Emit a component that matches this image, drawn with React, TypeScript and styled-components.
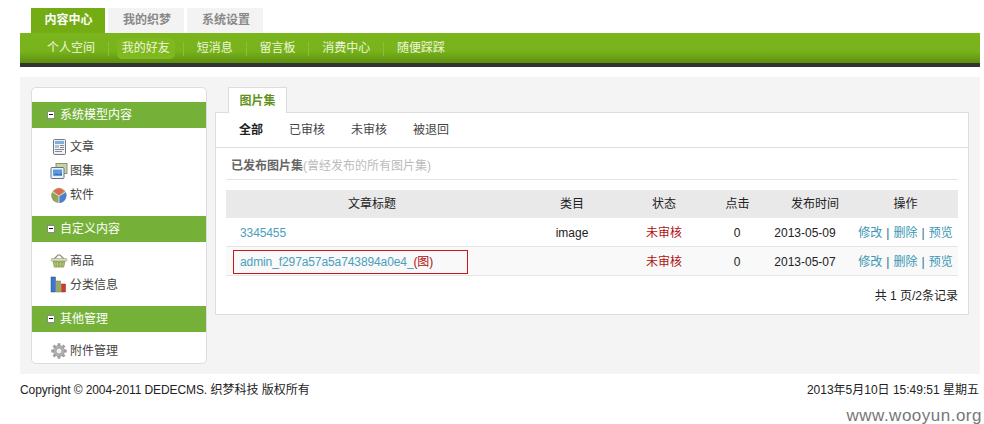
import React from "react";
import styled, { createGlobalStyle } from "styled-components";

const cjk = `"Liberation Sans", "Noto Sans CJK SC", sans-serif`;

const Global = createGlobalStyle`
  html, body { margin: 0; padding: 0; background: #fff; }
  body { font: 12px/18px ${cjk}; color: #333; }
`;

const Page = styled.div`
  width: 984px;
  height: 424px;
  overflow: hidden;
`;
const TopTabs = styled.div`
  display: flex;
  gap: 3px;
  height: 25px;
  padding: 8px 0 0 31px;
`;
const TopTab = styled.div<{ $active?: boolean }>`
  box-sizing: border-box;
  width: ${(p) => (p.$active ? 74 : 76)}px;
  padding-left: ${(p) => (p.$active ? 1 : 2)}px;
  text-align: center;
  line-height: 25px;
  font-weight: 700;
  font-size: 12px;
  color: ${(p) => (p.$active ? "#fff" : "#888")};
  background: ${(p) => (p.$active ? "#74ac14" : "#f3f3f3")};
`;
const NavBar = styled.div`
  display: flex;
  align-items: center;
  height: 30px;
  margin: 0 4px 0 20px;
  padding-left: 27px;
  background: linear-gradient(#7ab51d 0%, #78b31c 60%, #5c900f 100%);
  border-bottom: 4px solid #333;
`;
const NavItem = styled.div<{ $active?: boolean }>`
  position: relative;
  margin-right: 26.8px;
  white-space: nowrap;
  font-size: 12px;
  line-height: 20px;
  color: #eef6dc;
  &::before {
    content: "";
    display: ${(p) => (p.$active ? "block" : "none")};
    position: absolute;
    inset: 0 -5px -1px -5px;
    border-radius: 5px;
    background: #80b91f;
  }
  &::after {
    content: "";
    position: absolute;
    right: -14px;
    top: 4px;
    height: 14px;
    width: 1px;
    background: #8bbf34;
  }
  &:last-child::after {
    display: none;
  }
  & > span {
    position: relative;
  }
`;
const Main = styled.div`
  display: flex;
  gap: 8px;
  height: 277px;
  margin: 10px 4px 0 20px;
  padding: 10px 12px 10px 11px;
  background: #f4f4f4;
`;
const Sidebar = styled.div`
  box-sizing: border-box;
  flex: none;
  width: 176px;
  height: 277px;
  padding-top: 14px;
  background: #fff;
  border: 1px solid #ddd;
  border-radius: 5px;
`;
const GroupHead = styled.div`
  display: flex;
  align-items: center;
  gap: 5px;
  height: 26px;
  padding-left: 15px;
  background: #75b139;
  color: #fff;
  font-size: 12px;
`;
const Minus = styled.span`
  box-sizing: border-box;
  display: block;
  flex: none;
  position: relative;
  width: 8px;
  height: 8px;
  background: #fff;
  border: 1px solid #8a8a8a;
  &::after {
    content: "";
    position: absolute;
    left: 1px;
    top: 2px;
    width: 4px;
    height: 1px;
    background: #111;
  }
`;
const Items = styled.div<{ $pad: number }>`
  padding: 7px 0 ${(p) => p.$pad}px 18px;
`;
const Item = styled.div`
  display: flex;
  align-items: center;
  gap: 2px;
  height: 24px;
  color: #444;
  font-size: 12px;
`;
const Content = styled.div`
  flex: none;
  width: 754px;
  display: flex;
  flex-direction: column;
`;
const PanelTab = styled.div`
  box-sizing: border-box;
  width: 59px;
  height: 26px;
  margin-left: 13px;
  margin-bottom: -1px;
  background: #fff;
  border: 1px solid #ddd;
  border-bottom: 0;
  position: relative;
  z-index: 1;
  text-align: center;
  line-height: 26px;
  font-weight: 700;
  font-size: 12px;
  color: #63921a;
`;
const Panel = styled.div`
  box-sizing: border-box;
  width: 754px;
  height: 203px;
  background: #fff;
  border: 1px solid #ddd;
`;
const SubTabs = styled.div`
  display: flex;
  gap: 26px;
  height: 34px;
  padding-left: 23px;
  align-items: center;
  border-bottom: 1px solid #ddd;
  font-size: 12px;
  color: #444;
`;
const SubTab = styled.span<{ $active?: boolean }>`
  font-weight: ${(p) => (p.$active ? 700 : 400)};
  color: ${(p) => (p.$active ? "#222" : "#444")};
`;
const SectionTitle = styled.div`
  margin: 0 10px;
  padding-left: 5px;
  height: 31px;
  line-height: 36px;
  border-bottom: 1px solid #e4e4e4;
  font-size: 12px;
  font-weight: 700;
  color: #666;
  & > span {
    font-weight: 400;
    color: #bbb;
  }
`;
const Table = styled.table`
  width: 732px;
  margin: 10px 0 0 10px;
  border-collapse: collapse;
  table-layout: fixed;
  font-size: 12px;
`;
const Th = styled.th<{ $w: number; $pl?: number }>`
  box-sizing: border-box;
  width: ${(p) => p.$w}px;
  height: 28px;
  padding: 0 0 0 ${(p) => p.$pl || 0}px;
  background: #e9e9e9;
  font-weight: 400;
  color: #222;
  text-align: center;
  white-space: nowrap;
`;
const Tr = styled.tr<{ $alt?: boolean }>`
  background: ${(p) => (p.$alt ? "#f9f9f9" : "#fff")};
  border-bottom: 1px solid #e6e6e6;
`;
const Td = styled.td<{ $red?: boolean; $pr?: number }>`
  height: 27px;
  padding: 1px ${(p) => p.$pr || 0}px 0 0;
  text-align: center;
  white-space: nowrap;
  color: ${(p) => (p.$red ? "#b01010" : "#222")};
`;
const TitleTd = styled.td`
  position: relative;
  padding: 1px 0 0 14px;
  text-align: left;
  color: #4a9fc0;
  white-space: nowrap;
  letter-spacing: -0.1px;
`;
const RedBox = styled.div`
  position: absolute;
  box-sizing: border-box;
  left: 7px;
  top: 3px;
  width: 235px;
  height: 24px;
  border: 1px solid #c8171c;
`;
const Pic = styled.span`
  color: #b01010;
`;
const Link = styled.a`
  color: #3a97b5;
`;
const Sep = styled.span`
  color: #2a6c8a;
  margin: 0 4px;
`;
const Pager = styled.div`
  margin: 11px 10px 0 0;
  text-align: right;
  font-size: 12px;
  color: #222;
`;
const Footer = styled.div`
  display: flex;
  justify-content: space-between;
  margin: 7px 5px 0 20px;
  font-size: 12px;
  line-height: 18px;
  color: #222;
`;
const Latin = styled.span`
  letter-spacing: -0.1px;
`;
const Watermark = styled.div`
  margin: 8px 2px 0 0;
  text-align: right;
  font-family: "Liberation Sans", sans-serif;
  font-size: 17px;
  line-height: 18px;
  letter-spacing: 0.5px;
  color: #777;
`;
const Svg = styled.svg`
  display: block;
  flex: none;
`;

const DocIcon = () => (
  <Svg width="18" height="18" viewBox="0 0 18 18">
    <rect x="3.5" y="1.500" width="12" height="15" rx="1" fill="#eef2f6" stroke="#778" />
    <rect x="5" y="3" width="9" height="3" fill="#7fb0dc" />
    <rect x="5" y="7" width="4" height="3" fill="#a9c4de" />
    <path d="M10 7.500h4M10 9.500h4M5 11.500h9M5 13.500h7" stroke="#888" />
  </Svg>
);
const AlbumIcon = () => (
  <Svg width="18" height="18" viewBox="0 0 18 18">
    <rect x="6" y="1.500" width="11" height="10" fill="#c8d2a8" stroke="#8a9470" />
    <rect x="1" y="5.500" width="13" height="11" rx="1" fill="#eef2f8" stroke="#607488" />
    <rect x="3" y="7.500" width="9" height="6" fill="#5a9be0" />
    <path d="M3 13.500l3-2 3 1 3-1.500v2.500z" fill="#2f6fb8" />
  </Svg>
);
const SoftIcon = () => (
  <Svg width="18" height="18" viewBox="0 0 18 18">
    <circle cx="9" cy="9.500" r="7.500" fill="#9aa56a" />
    <path d="M9 10v7a7.500 7.500 0 0 0 6.800-10.500z" fill="#4a7fd0" />
    <path d="M4 4.500L9 2l5 2.500L9 10z" fill="#e8644a" />
    <path d="M9 10L2 6.500a7.500 7.500 0 0 0 3 9.500z" fill="#8fa25a" />
    <path d="M9 10v7M9 10l6.500-4M9 10L2.500 6" stroke="#e8e8e0" strokeWidth=".8" />
  </Svg>
);
const BasketIcon = () => (
  <Svg width="18" height="18" viewBox="0 0 18 18">
    <path d="M4 7l4-4h2l4 4" fill="none" stroke="#8a8a78" strokeWidth="1.200" />
    <rect x="1" y="6.500" width="16" height="2.500" rx="1" fill="#d8dcc0" stroke="#8a9060" strokeWidth=".5" />
    <path d="M2.500 9h13l-1.500 6.500H4z" fill="#96a85a" />
    <path d="M5 10v5M7.500 10v5M10.500 10v5M13 10v5M3 12h12" stroke="#b8c488" strokeWidth=".7" />
  </Svg>
);
const ChartIcon = () => (
  <Svg width="18" height="18" viewBox="0 0 18 18">
    <rect x="1" y="1" width="4.500" height="15" fill="#3f74c8" stroke="#23508f" strokeWidth=".5" />
    <rect x="6.500" y="5" width="4" height="11" fill="#96ab5e" stroke="#6a7c3c" strokeWidth=".5" />
    <rect x="11.500" y="8" width="4" height="8" fill="#c8402a" stroke="#8e2a1a" strokeWidth=".5" />
  </Svg>
);
const GearIcon = () => (
  <Svg width="18" height="18" viewBox="0 0 18 18">
    <path
      d="M9 1.200v3M9 13.800v3M1.200 9h3M13.800 9h3M3.500 3.500l2 2M12.500 12.500l2 2M14.500 3.500l-2 2M5.500 12.500l-2 2"
      stroke="#a0a0a0"
      strokeWidth="2.800"
    />
    <circle cx="9" cy="9" r="5.500" fill="#b4b4b4" stroke="#8e8e8e" strokeWidth=".6" />
    <circle cx="9" cy="9" r="3" fill="#f0f0f0" stroke="#808080" strokeWidth=".6" />
  </Svg>
);

const groups = [
  { title: "系统模型内容", pad: 9, items: [["文章", DocIcon], ["图集", AlbumIcon], ["软件", SoftIcon]] },
  { title: "自定义内容", pad: 9, items: [["商品", BasketIcon], ["分类信息", ChartIcon]] },
  { title: "其他管理", pad: 0, items: [["附件管理", GearIcon]] },
] as const;

const nav = ["个人空间", "我的好友", "短消息", "留言板", "消费中心", "随便踩踩"];

const Ops = () => (
  <>
    <Link>修改</Link>
    <Sep>|</Sep>
    <Link>删除</Link>
    <Sep>|</Sep>
    <Link>预览</Link>
  </>
);

export default function App() {
  return (
    <Page>
      <Global />
      <TopTabs>
        <TopTab $active>内容中心</TopTab>
        <TopTab>我的织梦</TopTab>
        <TopTab>系统设置</TopTab>
      </TopTabs>
      <NavBar>
        {nav.map((n, i) => (
          <NavItem key={n} $active={i === 1}>
            <span>{n}</span>
          </NavItem>
        ))}
      </NavBar>
      <Main>
        <Sidebar>
          {groups.map((g) => (
            <div key={g.title}>
              <GroupHead>
                <Minus />
                {g.title}
              </GroupHead>
              <Items $pad={g.pad}>
                {g.items.map(([label, Icon]) => (
                  <Item key={label}>
                    <Icon />
                    {label}
                  </Item>
                ))}
              </Items>
            </div>
          ))}
        </Sidebar>
        <Content>
          <PanelTab>图片集</PanelTab>
          <Panel>
            <SubTabs>
              <SubTab $active>全部</SubTab>
              <SubTab>已审核</SubTab>
              <SubTab>未审核</SubTab>
              <SubTab>被退回</SubTab>
            </SubTabs>
            <SectionTitle>
              已发布图片集<span>(曾经发布的所有图片集)</span>
            </SectionTitle>
            <Table>
              <thead>
                <tr>
                  <Th $w={292}>文章标题</Th>
                  <Th $w={108}>类目</Th>
                  <Th $w={76}>状态</Th>
                  <Th $w={70} $pl={1}>点击</Th>
                  <Th $w={81} $pl={5}>发布时间</Th>
                  <Th $w={105}>操作</Th>
                </tr>
              </thead>
              <tbody>
                <Tr>
                  <TitleTd>3345455</TitleTd>
                  <Td>image</Td>
                  <Td $red>未审核</Td>
                  <Td>0</Td>
                  <Td $pr={15}>2013-05-09</Td>
                  <Td><Ops /></Td>
                </Tr>
                <Tr $alt>
                  <TitleTd>
                    admin_f297a57a5a743894a0e4_<Pic>(图)</Pic>
                    <RedBox />
                  </TitleTd>
                  <Td />
                  <Td $red>未审核</Td>
                  <Td>0</Td>
                  <Td $pr={15}>2013-05-07</Td>
                  <Td><Ops /></Td>
                </Tr>
              </tbody>
            </Table>
            <Pager>共 1 页/2条记录</Pager>
          </Panel>
        </Content>
      </Main>
      <Footer>
        <span>
          <Latin>Copyright © 2004-2011 DEDECMS.</Latin> 织梦科技 版权所有
        </span>
        <span>2013年5月10日 15:49:51 星期五</span>
      </Footer>
      <Watermark>www.wooyun.org</Watermark>
    </Page>
  );
}
